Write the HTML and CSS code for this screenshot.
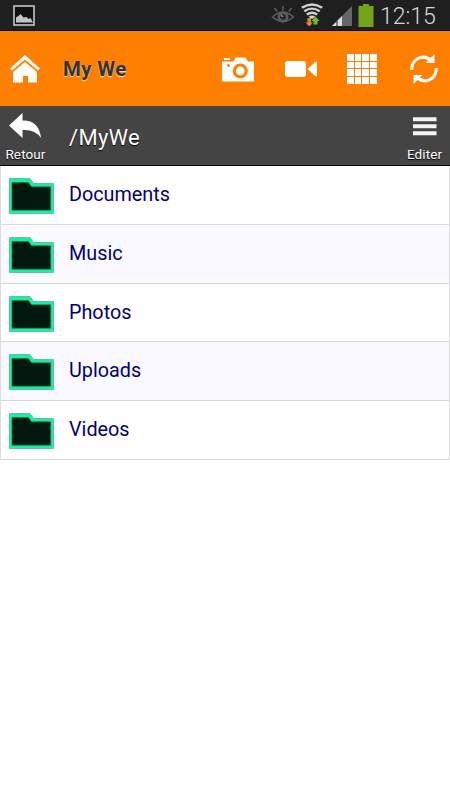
FILE: index.html
```html
<!DOCTYPE html>
<html lang="fr">
<head>
  <meta charset="UTF-8" />
  <title>My We</title>
  <link rel="stylesheet" href="styles.css">
</head>
<body>
  <div class="status">
    <svg class="picture" width="24" height="24" viewBox="0 0 24 24">
      <rect x="2" y="2" width="20" height="19" fill="#111" stroke="#bcbcbc" stroke-width="1.7"/>
      <path d="M4 18.500v-5l3-2 1.500-1.500 3 3.500 3-.5 2 2 2-1 2.500 4.500z" fill="#c4c4c4"/>
    </svg>
    <svg class="eye" width="24" height="22" viewBox="0 0 24 22" fill="none" stroke="#5b5b5b">
      <path d="M1.500 13Q12 3 22.500 13Q12 22 1.500 13z" stroke-width="1.600"/>
      <circle cx="12" cy="13" r="4.200" stroke-width="2.800"/>
      <path d="M12 13l-2-2" stroke="#888" stroke-width="1.500"/>
      <path d="M12 2v4.500M3.500 4l2.500 3.500M20.500 4l-2.500 3.500" stroke-width="1.600"/>
    </svg>
    <svg class="wifi" width="22" height="26" viewBox="0 0 22 26">
      <g fill="none" stroke="#cfcfcf" stroke-width="2.400">
        <path d="M.8 4.800Q11 -1.800 21.200 4.800"/>
        <path d="M3.300 8.300Q11 3 18.700 8.300"/>
        <path d="M5.800 11.500Q11 8 16.200 11.500"/>
      </g>
      <path d="M7.500 13.800Q11 11 14.500 13.800L11 16z" fill="#cfcfcf"/>
      <path d="M6.500 15h3.500v4.500h2L8.300 23.500 4.500 19.500h2z" fill="#d9852b"/>
      <path d="M12.500 21.500V18h-2l4-4.500 4 4.500h-2v3.500z" fill="#72bf0c"/>
    </svg>
    <svg class="signal" width="20" height="20" viewBox="0 0 20 20">
      <path d="M0 20L20 0v20z" fill="#666"/>
      <path d="M0 20L4.500 15.500V20zM5.500 20v-5.500l4.500-4.500v10z" fill="#ddd"/>
      <path d="M5 14v6" stroke="#555" stroke-width="1"/>
    </svg>
    <svg class="battery" width="16" height="23" viewBox="0 0 16 23">
      <path d="M5 0h6v2h4.500v21H.5V2H5z" fill="#72a318"/>
    </svg>
    <span class="clock">12:15</span>
  </div>

  <div class="header">
    <svg class="home" width="30" height="28" viewBox="0 0 30 28" fill="#fff">
      <path d="M0 13.500L15 0l15 13.500-2 2L15 4.500 2 15.500z"/>
      <path d="M3 17L15 7l12 10v10.500h-9V21h-5v6.500H3z"/>
    </svg>
    <h1>My We</h1>
    <svg class="camera" width="32" height="25" viewBox="0 0 32 25">
      <path d="M0 24.500V4.500h11.500L13.500.5h10l2.500 4h6v20zM2 1h6v2H2z" fill="#fff"/>
      <circle cx="18.300" cy="14" r="6" fill="none" stroke="#ff8000" stroke-width="3.200"/>
      <circle cx="6.500" cy="8.500" r="1.500" fill="#ff8000"/>
    </svg>
    <svg class="video" width="32" height="16" viewBox="0 0 32 16" fill="#fff">
      <rect width="21" height="16" rx="3"/>
      <path d="M22.500 8L30 1.300Q32 0 32 1v14q0 1-2-.3z"/>
    </svg>
    <div class="grid">
      <i></i><i></i><i></i><i></i>
      <i></i><i></i><i></i><i></i>
      <i></i><i></i><i></i><i></i>
      <i></i><i></i><i></i><i></i>
    </div>
    <svg class="refresh" width="28" height="30" viewBox="0 0 28 30">
      <g fill="none" stroke="#fff" stroke-width="3">
        <path d="M1.700 16Q1.500 8 8 4.500T21 6.500"/>
        <path d="M26.300 14Q26.500 22 20 25.500T7 23.500"/>
      </g>
      <path d="M24.500 0v9H15.500zM3.500 30v-9h9z" fill="#fff"/>
    </svg>
  </div>

  <div class="pathbar">
    <div class="button back">
      <svg width="33" height="26" viewBox="0 0 33 26">
        <path d="M0 12.500L13.500 0v7.500Q30 7 32 25 26 16 13.500 17v8z" fill="#fff"/>
      </svg>
      <span>Retour</span>
    </div>
    <div class="path">/MyWe</div>
    <div class="button edit">
      <svg width="24" height="19" viewBox="0 0 24 19">
        <path d="M0 2.200h23.500M0 9.200h23.500M0 16.200h23.500" stroke="#f4f4f4" stroke-width="4"/>
      </svg>
      <span>Editer</span>
    </div>
  </div>

  <svg class="defs" width="0" height="0">
    <symbol id="folder" viewBox="0 0 45 36">
      <path d="M.5.5h20.500l3.500 5h20v30H.5z" fill="#10f3a2" stroke="#6dba9c" stroke-width="1"/>
      <path d="M3 4.500h16.500l3 4.300h19.200v23.400H3z" fill="#03180e" stroke="#087e50" stroke-width=".6"/>
    </symbol>
  </svg>
  <ul class="files">
    <li><svg class="folder"><use href="#folder"/></svg><span>Documents</span></li>
    <li><svg class="folder"><use href="#folder"/></svg><span>Music</span></li>
    <li><svg class="folder"><use href="#folder"/></svg><span>Photos</span></li>
    <li><svg class="folder"><use href="#folder"/></svg><span>Uploads</span></li>
    <li><svg class="folder"><use href="#folder"/></svg><span>Videos</span></li>
  </ul>
</body>
</html>
```
FILE: styles.css
```css
* {
  box-sizing: border-box;
}
body {
  margin: 0;
  background: #fff;
  font-family: Roboto, sans-serif;
}
svg {
  display: block;
  flex: none;
}
.status {
  display: flex;
  align-items: flex-start;
  height: 31px;
  padding-left: 12px;
  background: #1f1f1f;
  border-bottom: 1px solid #080820;
}
.picture {
  margin-top: 4px;
}
.eye {
  margin: 4px 0 0 235px;
}
.wifi {
  margin: 3px 0 0 6px;
}
.signal {
  margin: 6px 0 0 9px;
}
.battery {
  margin: 4px 0 0 6px;
}
.clock {
  margin-left: 6px;
  color: #d8d8d8;
  font-size: 23px;
  font-weight: 300;
  line-height: 33px;
}
.header {
  display: flex;
  align-items: flex-start;
  height: 75px;
  padding-left: 10px;
  background: #ff8000;
}
.home {
  margin-top: 24px;
}
h1 {
  width: 159px;
  margin: 0;
  padding-left: 23px;
  color: #333;
  font-size: 20.500px;
  letter-spacing: .3px;
  line-height: 76px;
  text-shadow: 0 1px 1px #eee;
}
.camera {
  margin: 26px 0 0 23px;
}
.video {
  margin: 30px 0 0 31px;
}
.grid {
  display: grid;
  grid-template-columns: repeat(4, 6.700px);
  grid-auto-rows: 6.700px;
  gap: 1px;
  margin: 23px 0 0 30px;
}
.grid i {
  background: #fff;
}
.refresh {
  margin: 23px 0 0 33px;
}
.pathbar {
  display: flex;
  height: 60px;
  background: #444;
  border-bottom: 1px solid #000;
  color: #fff;
  text-shadow: 0 1px 1px #000;
}
.button {
  display: flex;
  flex-direction: column;
  align-items: center;
  width: 51px;
  font-size: 13.500px;
  letter-spacing: .1px;
  line-height: 16px;
}
.back svg {
  margin: 7px 0;
}
.edit svg {
  margin: 11px 0 10px;
}
.path {
  flex: 1;
  padding-left: 18px;
  font-size: 22px;
  letter-spacing: .3px;
  line-height: 63px;
}
.defs {
  position: absolute;
}
.files {
  margin: 0;
  padding: 0;
  list-style: none;
  border: 1px solid #ddd;
  border-top: 0;
  border-bottom: 0;
}
.files li {
  display: flex;
  height: 58.750px;
  border-bottom: 1px solid #d8d8d8;
  color: #00007c;
  font-size: 19.800px;
  line-height: 57.500px;
}
.files li:nth-child(even) {
  background: #f9f9ff;
}
.folder {
  width: 45px;
  height: 36px;
  margin: 12px 15px 0 8px;
}
```
